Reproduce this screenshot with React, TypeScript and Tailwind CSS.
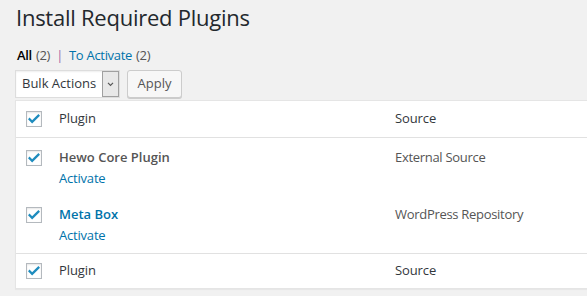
const rows = [
  { name: "Hewo Core Plugin", source: "External Source", link: false, h: "h-[57px]" },
  { name: "Meta Box", source: "WordPress Repository", link: true, h: "h-[58px]" },
];

function Check() {
  return (
    <span className="flex h-4 w-4 items-center justify-center border border-[#b4b9be] bg-white shadow-[inset_0_1px_2px_rgba(0,0,0,0.1)]">
      <svg viewBox="0 0 16 16" className="h-[14px] w-[14px]">
        <path d="M3 8.2l2.9 3L13 4.2" fill="none" stroke="#1e8cbe" strokeWidth="2.6" strokeLinecap="square" />
      </svg>
    </span>
  );
}

function HeadRow({ top }: { top?: boolean }) {
  return (
    <div className={`flex items-center ${top ? "h-[37px] border-b" : "h-[35px] border-t"} border-[#e1e1e1]`}>
      <div className="w-[43px] pl-[10px]">
        <Check />
      </div>
      <div className="w-[336px] text-[13px] tracking-[-0.1px] text-[#32373c]">Plugin</div>
      <div className="text-[13px] tracking-[-0.1px] text-[#32373c]">Source</div>
    </div>
  );
}

export default function App() {
  return (
    <div className="h-[296px] w-[587px] overflow-hidden bg-[#f1f1f1] font-['Open_Sans',sans-serif] text-[13px] text-[#444]">
      <div className="pl-[16px] pt-[3px]">
        <h1 className="text-[22px] leading-[29px] tracking-[-0.25px] text-[#23282d]">Install Required Plugins</h1>
      </div>
      <div className="mt-[14px] flex items-center pl-[17px] text-[13px] leading-[18px] tracking-[-0.3px]">
        <span className="font-semibold text-black">All</span>
        <span className="ml-[4px] text-[#555]">(2)</span>
        <span className="ml-[6px] mr-[6px] text-[#a069a8]">|</span>
        <span className="text-[#0073aa]">To Activate</span>
        <span className="ml-[4px] text-[#555]">(2)</span>
      </div>
      <div className="mt-[6px] flex items-center gap-[7px] pl-[15px]">
        <div className="flex h-[28px] w-[105px] items-stretch border border-[#ddd] bg-white shadow-[inset_0_1px_2px_rgba(0,0,0,0.07)]">
          <span className="flex flex-1 items-center pl-[6px] text-[13px] text-[#32373c]">Bulk Actions</span>
          <span className="flex w-[17px] items-center justify-center border border-[#a0a0a0] bg-[#e8e8e8]">
            <svg viewBox="0 0 8 6" className="h-[5px] w-[7px]">
              <path d="M1 1l3 3 3-3" fill="none" stroke="#555" strokeWidth="1.4" />
            </svg>
          </span>
        </div>
        <button className="h-[28px] w-[55px] rounded-[3px] border border-[#ccc] bg-[#f7f7f7] text-[13px] text-[#555] shadow-[0_1px_0_#ccc]">
          Apply
        </button>
      </div>
      <div className="ml-[15px] mt-[2px] border border-r-0 border-[#e5e5e5] bg-white shadow-[0_1px_1px_rgba(0,0,0,0.04)]">
        <HeadRow top />
        {rows.map((r) => (
          <div key={r.name} className={`flex ${r.h} items-start pt-[9px]`}>
            <div className="w-[43px] pl-[10px] pt-[3px]">
              <Check />
            </div>
            <div className="w-[336px]">
              <div className={`text-[13px] font-semibold leading-[20px] ${r.link ? "text-[#0073aa]" : "text-[#555]"}`}>{r.name}</div>
              <div className="mt-[1px] text-[13px] leading-[20px] tracking-[-0.2px] text-[#0073aa]">Activate</div>
            </div>
            <div className="text-[13px] leading-[20px] tracking-[-0.3px] text-[#555]">{r.source}</div>
          </div>
        ))}
        <HeadRow />
      </div>
    </div>
  );
}
